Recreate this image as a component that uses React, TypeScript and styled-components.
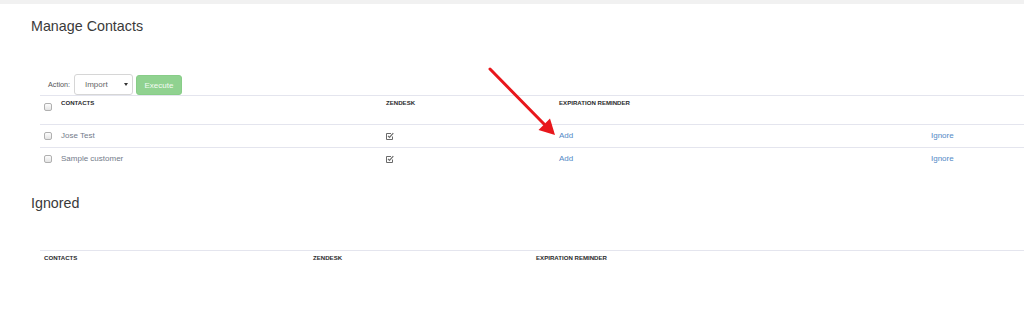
import React from "react";
import styled, { createGlobalStyle } from "styled-components";

const GlobalStyle = createGlobalStyle`
  html, body { margin: 0; padding: 0; background: #fff; }
  body { font-family: "Liberation Sans", Arial, sans-serif; color: #333; }
`;

const Page = styled.div`
  position: relative;
  width: 1024px;
  height: 309px;
  overflow: hidden;
`;

const TopBar = styled.div`
  height: 4px;
  background: #f1f1f1;
`;

const Content = styled.div`
  padding-left: 31px;
`;

const Heading = styled.h1<{ $top: number }>`
  margin: ${(p) => p.$top}px 0 0 0;
  font-size: 14.3px;
  line-height: 16px;
  font-weight: 400;
  color: #3a3a3a;
`;

const TableBlock = styled.div<{ $top: number }>`
  margin: ${(p) => p.$top}px 0 0 9px;
`;

const ActionBar = styled.div`
  display: flex;
  align-items: flex-end;
  padding-left: 8px;
  height: 21px;
`;

const ActionLabel = styled.span`
  font-size: 7.2px;
  line-height: 21px;
  color: #555;
  margin-right: 4px;
`;

const Select = styled.div`
  box-sizing: border-box;
  width: 59px;
  height: 21px;
  border: 1px solid #d6d6d6;
  border-radius: 3px;
  background: #fff;
  display: flex;
  align-items: center;
  justify-content: space-between;
  padding: 0 4px 0 10px;
  font-size: 8px;
  color: #666;
`;

const Caret = styled.span`
  width: 0;
  height: 0;
  border-left: 2px solid transparent;
  border-right: 2px solid transparent;
  border-top: 3px solid #333;
`;

const ExecuteButton = styled.button`
  box-sizing: border-box;
  margin-left: 3px;
  width: 46px;
  height: 20px;
  border: 1px solid #88cd88;
  border-radius: 3px;
  background: #90d290;
  color: #f4fbf4;
  font-family: "Liberation Sans", Arial, sans-serif;
  font-size: 8px;
  padding: 0;
`;

const Row = styled.div<{ $cols: string; $height: number; $header?: boolean }>`
  display: grid;
  grid-template-columns: ${(p) => p.$cols};
  align-items: ${(p) => (p.$header ? "start" : "center")};
  box-sizing: border-box;
  height: ${(p) => p.$height}px;
  border-top: 1px solid #e4e5ee;
  padding-left: 4px;
  padding-top: ${(p) => (p.$header ? 3 : 0)}px;
`;

const HeadCell = styled.div`
  font-size: 6.1px;
  line-height: 8px;
  font-weight: 700;
  color: #2a2a2a;
  white-space: nowrap;
`;

const Cell = styled.div`
  font-size: 8px;
  line-height: 10px;
  color: #737b8a;
  white-space: nowrap;
`;

const Link = styled.a`
  font-size: 8px;
  line-height: 10px;
  color: #5289c6;
  text-decoration: none;
  white-space: nowrap;
`;

const Checkbox = styled.span<{ $offset?: number }>`
  display: block;
  box-sizing: border-box;
  width: 8px;
  height: 8px;
  margin-top: ${(p) => p.$offset ?? 0}px;
  border: 1px solid #b0b0b0;
  border-radius: 2px;
  background: linear-gradient(#fdfdfd, #e4e4e4);
`;

const ArrowSvg = styled.svg`
  position: absolute;
  left: 480px;
  top: 60px;
`;

const CheckedIcon = () => (
  <svg width="8" height="8" viewBox="0 0 8 8" style={{ display: "block" }}>
    <path d="M0.5 1.5 H5 M0.5 1.5 V7.5 H6.5 V4.5" fill="none" stroke="#6a6a6a" strokeWidth="1" />
    <path d="M2 3.8 L3.5 5.3 L7.3 1.2" fill="none" stroke="#6a6a6a" strokeWidth="1.2" />
  </svg>
);

const cols1 = "17px 325px 173px 372px 1fr";
const cols2 = "269px 223px 1fr";

const contacts = ["Jose Test", "Sample customer"];

export default function App() {
  return (
    <Page>
      <GlobalStyle />
      <TopBar />
      <Content>
        <Heading $top={14}>Manage Contacts</Heading>
        <TableBlock $top={40}>
          <ActionBar>
            <ActionLabel>Action:</ActionLabel>
            <Select>
              <span>Import</span>
              <Caret />
            </Select>
            <ExecuteButton>Execute</ExecuteButton>
          </ActionBar>
          <Row $cols={cols1} $height={29} $header>
            <Checkbox $offset={4} />
            <HeadCell>CONTACTS</HeadCell>
            <HeadCell>ZENDESK</HeadCell>
            <HeadCell>EXPIRATION REMINDER</HeadCell>
            <HeadCell />
          </Row>
          {contacts.map((name) => (
            <Row key={name} $cols={cols1} $height={23}>
              <Checkbox />
              <Cell>{name}</Cell>
              <CheckedIcon />
              <Link href="#">Add</Link>
              <Link href="#">Ignore</Link>
            </Row>
          ))}
        </TableBlock>
        <Heading $top={25}>Ignored</Heading>
        <TableBlock $top={39}>
          <Row $cols={cols2} $height={20} $header>
            <HeadCell>CONTACTS</HeadCell>
            <HeadCell>ZENDESK</HeadCell>
            <HeadCell>EXPIRATION REMINDER</HeadCell>
          </Row>
        </TableBlock>
      </Content>
      <ArrowSvg width="80" height="80" viewBox="0 0 80 80">
        <line x1="10" y1="9" x2="64" y2="64" stroke="#e8171c" strokeWidth="3" strokeLinecap="round" />
        <polygon points="75,75 58.5,70 70,58.5" fill="#e8171c" />
      </ArrowSvg>
    </Page>
  );
}
